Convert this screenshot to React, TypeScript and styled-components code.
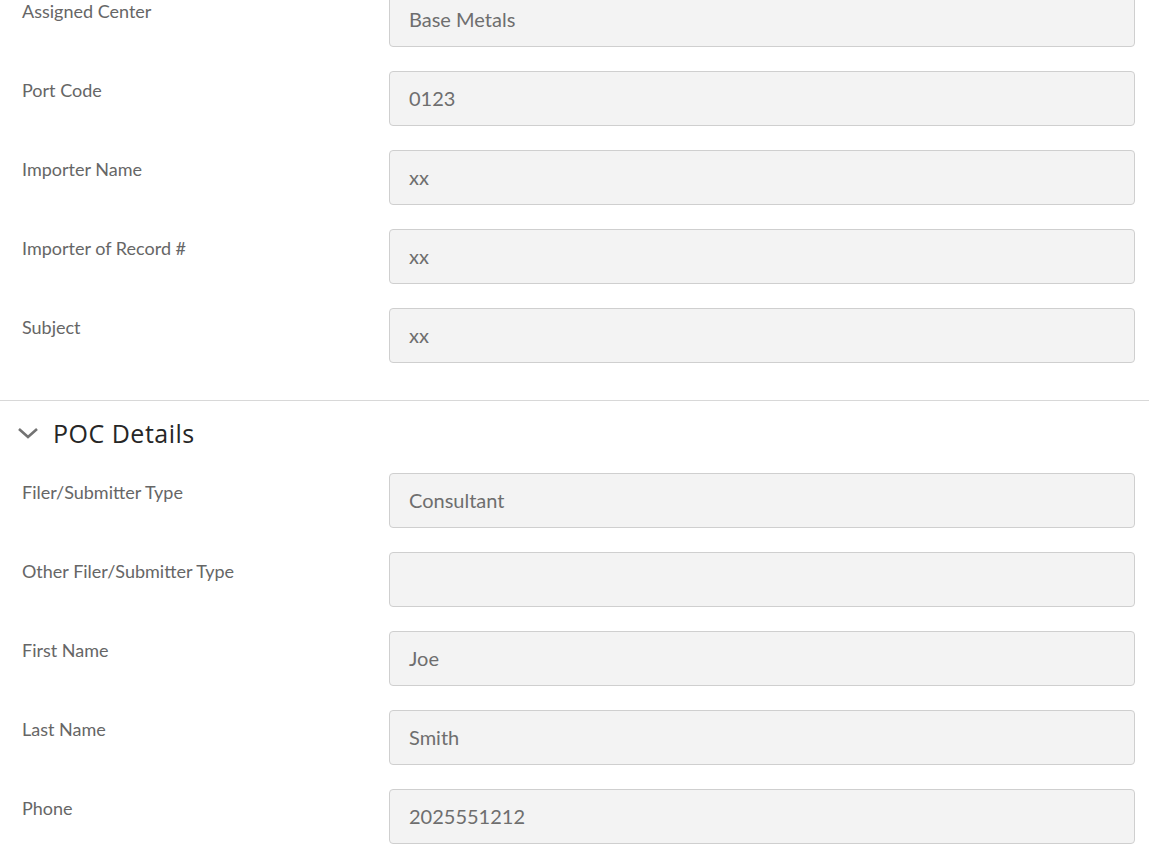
import styled, { createGlobalStyle } from 'styled-components';

const GlobalStyle = createGlobalStyle`
    body {
        margin: 0;
        background-color: #ffffff;
        font-family: Lato, 'Open Sans', sans-serif;
    }
`;

type Field = { label: string; value: string };

const assignment: Field[] = [
    { label: 'Assigned Center', value: 'Base Metals' },
    { label: 'Port Code', value: '0123' },
    { label: 'Importer Name', value: 'xx' },
    { label: 'Importer of Record #', value: 'xx' },
    { label: 'Subject', value: 'xx' },
];

const poc: Field[] = [
    { label: 'Filer/Submitter Type', value: 'Consultant' },
    { label: 'Other Filer/Submitter Type', value: '' },
    { label: 'First Name', value: 'Joe' },
    { label: 'Last Name', value: 'Smith' },
    { label: 'Phone', value: '2025551212' },
];

const FieldRows: React.FC<{ fields: Field[]; offset?: number }> = ({ fields, offset = 0 }) => (
    <StyledFieldList offset={offset}>
        {fields.map((f) => (
            <StyledRow key={f.label}>
                <StyledLabel>{f.label}</StyledLabel>
                <StyledValue>{f.value}</StyledValue>
            </StyledRow>
        ))}
    </StyledFieldList>
);

const App = () => {
    return (
        <StyledPage>
            <GlobalStyle />
            <StyledSection>
                <FieldRows fields={assignment} offset={-8} />
            </StyledSection>
            <StyledDivider />
            <StyledSectionHeader>
                <svg width="22" height="14" viewBox="0 0 22 14">
                    <path d="M2 3 L11 11 L20 3" fill="none" stroke="#737373" strokeWidth="2.6" />
                </svg>
                <StyledSectionTitle>POC Details</StyledSectionTitle>
            </StyledSectionHeader>
            <StyledSection>
                <FieldRows fields={poc} />
            </StyledSection>
        </StyledPage>
    );
};

const StyledPage = styled.div`
    display: flex;
    flex-direction: column;
    width: 100%;
    height: 855px;
    overflow: hidden;
`;

const StyledSection = styled.div`
    padding: 0 14px 0 22px;
`;

const StyledFieldList = styled.div<{ offset: number }>`
    display: flex;
    flex-direction: column;
    gap: 24px;
    margin-top: ${({ offset }) => offset}px;
`;

const StyledRow = styled.div`
    display: grid;
    grid-template-columns: 367px 1fr;
    align-items: start;
`;

const StyledLabel = styled.div`
    padding-top: 7px;
    font-size: 18px;
    line-height: 24px;
    color: #666666;
`;

const StyledValue = styled.div`
    box-sizing: border-box;
    display: flex;
    align-items: center;
    height: 55px;
    padding: 0 19px 1px 19px;
    border: 1px solid #cfcfcf;
    border-radius: 4px;
    background-color: #f3f3f3;
    font-size: 20px;
    line-height: 24px;
    color: #6e6e6e;
`;

const StyledDivider = styled.div`
    margin-top: 37px;
    height: 1px;
    background-color: #d8d8d8;
`;

const StyledSectionHeader = styled.div`
    display: flex;
    align-items: center;
    gap: 14px;
    height: 64px;
    padding: 0 0 0 17px;
    margin-bottom: 8px;
`;

const StyledSectionTitle = styled.h2`
    margin: 0;
    font-family: 'Open Sans', sans-serif;
    font-weight: 500;
    font-size: 25px;
    letter-spacing: 0.5px;
    color: #262626;
`;

export default App;
